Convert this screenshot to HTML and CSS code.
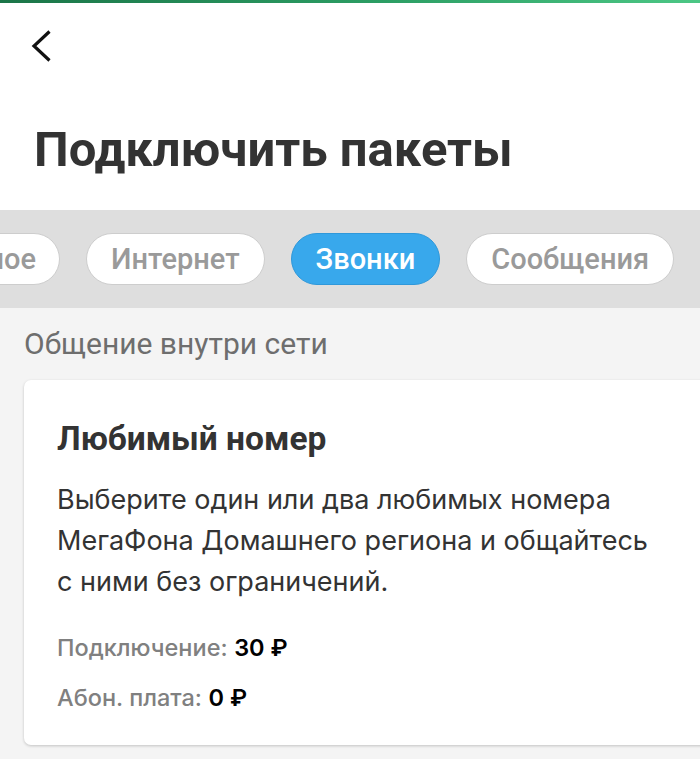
FILE: index.html
```html
<!DOCTYPE html>
<html lang="ru">
<head>
<meta charset="utf-8">
<link rel="stylesheet" href="styles.css">
</head>
<body>
<div class="topline"></div>
<header class="header">
  <button class="back" aria-label="Назад">
    <svg width="22" height="32" viewBox="0 0 22 32"><path d="M19.5 1.5 L4 16 L19.5 30.5" fill="none" stroke="#111" stroke-width="3.2" stroke-linecap="butt" stroke-linejoin="miter"/></svg>
  </button>
  <h1 class="title">Подключить пакеты</h1>
</header>
<nav class="tabs">
  <div class="tabs-row">
    <span class="pill pill-first">Популярное</span>
    <span class="pill">Интернет</span>
    <span class="pill pill-active">Звонки</span>
    <span class="pill">Сообщения</span>
    <span class="pill">Роуминг</span>
  </div>
</nav>
<main class="content">
  <h2 class="section">Общение внутри сети</h2>
  <article class="card">
    <h3 class="card-title">Любимый номер</h3>
    <p class="card-text">Выберите один или два любимых номера МегаФона Домашнего региона и общайтесь с ними без ограничений.</p>
    <div class="price price-first"><span class="price-label">Подключение:</span> <b class="price-value">30 ₽</b></div>
    <div class="price"><span class="price-label">Абон. плата:</span> <b class="price-value">0 ₽</b></div>
  </article>
</main>
</body>
</html>
```
FILE: styles.css
```css
* { box-sizing: border-box; }
html, body { margin: 0; padding: 0; }
body {
  width: 700px;
  height: 759px;
  overflow: hidden;
  background: #f4f4f4;
  font-family: Roboto, "Liberation Sans", sans-serif;
  color: #333;
}
.topline {
  height: 3px;
  background: linear-gradient(90deg, #1b7548, #2c9e64 55%, #4cc785);
}
.header {
  background: #fff;
  height: 207px;
  padding: 27px 0 0 0;
  display: flex;
  flex-direction: column;
  align-items: flex-start;
}
.back {
  display: block;
  margin: 0 0 0 30px;
  padding: 0;
  border: 0;
  background: none;
  width: 22px;
  height: 32px;
}
.back svg { display: block; }
.title {
  margin: 59px 0 0 34px;
  font-size: 49px;
  font-weight: 700;
  color: #333;
  line-height: 58px;
}
.tabs {
  background: #dedede;
  height: 98px;
  overflow: hidden;
  display: flex;
  align-items: center;
}
.tabs-row {
  display: flex;
  gap: 26px;
  margin-left: -150px;
  white-space: nowrap;
}
.pill {
  flex: none;
  height: 52px;
  padding: 0 24px;
  border-radius: 26px;
  background: #fff;
  border: 1px solid #cdcdcd;
  color: #9a9a9a;
  font-size: 29px;
  font-weight: 500;
  display: flex;
  align-items: center;
}
.pill-first {
  width: 210px;
  justify-content: flex-end;
  padding-right: 23px;
}
.pill-active {
  background: #38a8ec;
  border-color: #2f98da;
  color: #fff;
}
.content {
  padding: 18px 0 0 24px;
}
.section {
  margin: 0;
  font-size: 30px;
  font-weight: 400;
  color: #6e6e6e;
  line-height: 36px;
}
.card {
  margin-top: 18px;
  margin-right: -20px;
  background: #fff;
  border-radius: 7px;
  box-shadow: 0 1px 3px rgba(0,0,0,0.2);
  padding: 39px 33px 31px;
  height: 365px;
}
.card-title {
  margin: 0;
  font-size: 33.5px;
  font-weight: 700;
  color: #333;
  line-height: 40px;
}
.card-text {
  margin: 20px 0 0;
  font-family: Inter, Roboto, sans-serif;
  font-size: 27px;
  line-height: 41px;
  color: #333;
  max-width: 612px;
}
.price {
  margin-top: 18px;
  font-family: Inter, Roboto, sans-serif;
  font-size: 23.5px;
  line-height: 32px;
}
.price-first { margin-top: 30px; }
.price-label { color: #808080; font-weight: 500; }
.price-value { color: #000; font-weight: 600; }
```
